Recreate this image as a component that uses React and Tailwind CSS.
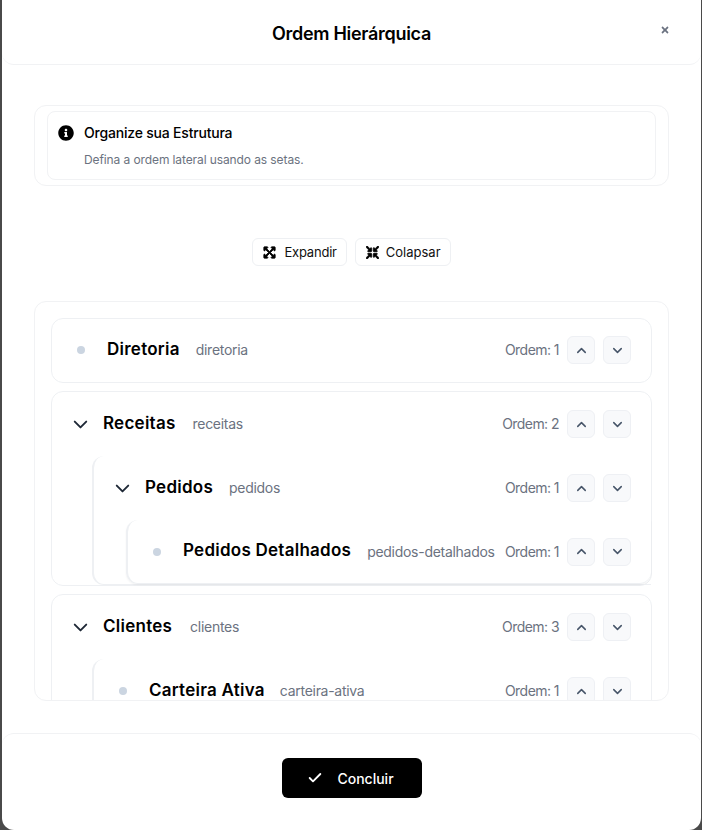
import React from "react";
import { ChevronDown, ChevronUp, Check } from "lucide-react";
import { FaInfoCircle, FaExpandArrowsAlt, FaCompressArrowsAlt, FaTimes } from "react-icons/fa";

function Order({ n }) {
  return (
    <div className="ml-auto flex items-center shrink-0">
      <span className="text-[14px] text-[#6b7280] mr-2 pb-px whitespace-nowrap tracking-[-0.55px]">Ordem: {n}</span>
      <button className="w-7 h-7 rounded-md border border-[#eef0f4] bg-[#f8f9fb] flex items-center justify-center text-[#475569] mr-2">
        <ChevronUp size={15} strokeWidth={2.4} />
      </button>
      <button className="w-7 h-7 rounded-md border border-[#eef0f4] bg-[#f8f9fb] flex items-center justify-center text-[#475569]">
        <ChevronDown size={15} strokeWidth={2.4} />
      </button>
    </div>
  );
}

function Row({ height, pad, marker, name, slug, n, nameClass }) {
  return (
    <div className={`flex items-center pr-5 ${height} ${pad}`}>
      {marker === "chevron" ? (
        <ChevronDown size={23} strokeWidth={2} className="text-[#1f2937] shrink-0" />
      ) : (
        <span className="w-2 h-2 rounded-full bg-[#cbd5e1] shrink-0" />
      )}
      <span className={`text-[17px] font-semibold text-black whitespace-nowrap tracking-[0.25px] pb-px ${nameClass}`}>{name}</span>
      <span className="text-[14px] text-[#6b7280] whitespace-nowrap ml-4 pb-px tracking-[-0.28px]">{slug}</span>
      <Order n={n} />
    </div>
  );
}

export default function App() {
  return (
    <div className="h-[830px] w-[702px] bg-[#4a4a4a] overflow-hidden font-['Inter',sans-serif]">
      <div className="ml-[2px] w-[699px] h-[830px] bg-white rounded-b-xl flex flex-col">
        <header className="h-[65px] shrink-0 relative flex items-center justify-center border-b border-[#f1f2f4] rounded-b-xl">
          <h1 className="text-[18px] font-semibold text-black tracking-[-0.3px] pt-[2px]">Ordem Hierárquica</h1>
          <FaTimes className="absolute right-[31px] top-[25px] text-[#6b7280]" size={10} />
        </header>

        <main className="flex-1 min-h-0 px-8 pt-10">
          <section className="rounded-xl border border-[#f1f2f4] px-3 py-[5px]">
            <div className="rounded-lg border border-[#f1f2f4] h-[69px] pl-[10px] pt-[10px]">
              <div className="flex items-center gap-[10px]">
                <FaInfoCircle size={16} className="text-black shrink-0" />
                <span className="text-[14px] font-medium text-black tracking-[-0.2px]">Organize sua Estrutura</span>
              </div>
              <p className="text-[12px] text-[#6b7280] ml-[26px] mt-2 tracking-[-0.1px]">Defina a ordem lateral usando as setas.</p>
            </div>
          </section>

          <div className="flex justify-center gap-2 mt-[52px]">
            <button className="h-7 pl-[10px] pr-[9px] pt-px rounded-md border border-[#eef0f3] flex items-center gap-2 text-[13px] text-[#111] tracking-[-0.2px]">
              <FaExpandArrowsAlt size={13} stroke="currentColor" strokeWidth={30} className="text-black" />Expandir
            </button>
            <button className="h-7 pl-[10px] pr-[9px] pt-px rounded-md border border-[#eef0f3] flex items-center gap-[7px] text-[13px] text-[#111]">
              <FaCompressArrowsAlt size={13} stroke="currentColor" strokeWidth={30} className="text-black" />Colapsar
            </button>
          </div>

          <section className="mt-[35px] h-[400px] rounded-xl border border-[#f1f2f4] p-4 pb-0 overflow-hidden flex flex-col gap-2">
            <div className="rounded-xl border border-[#eef0f3] shrink-0">
              <Row height="h-[63px] pb-px" pad="pl-[25px]" marker="dot" name="Diretoria" slug="diretoria" n={1} nameClass="ml-[22px]" />
            </div>

            <div className="rounded-xl border border-[#eef0f3] shrink-0">
              <Row height="h-16" pad="pl-[17px]" marker="chevron" name="Receitas" slug="receitas" n={2} nameClass="ml-[11px] mr-px" />
              <div className="ml-[40px] rounded-l-xl border-l-2 border-b border-[#eef0f3]">
                <Row height="h-16" pad="pl-[17px]" marker="chevron" name="Pedidos" slug="pedidos" n={1} nameClass="ml-[11px]" />
                <div className="ml-[32px] rounded-l-xl rounded-br-xl border-l-2 border-b border-[#eef0f3] shadow-[0_1px_2px_rgba(0,0,0,0.05)]">
                  <Row height="h-[63px]" pad="pl-[25px]" marker="dot" name="Pedidos Detalhados" slug="pedidos-detalhados" n={1} nameClass="ml-[22px]" />
                </div>
              </div>
            </div>

            <div className="rounded-xl border border-[#eef0f3] shrink-0">
              <Row height="h-16" pad="pl-[17px]" marker="chevron" name="Clientes" slug="clientes" n={3} nameClass="ml-[11px] mr-[2px]" />
              <div className="ml-[40px] rounded-l-xl border-l-2 border-[#eef0f3]">
                <Row height="h-16" pad="pl-[25px]" marker="dot" name="Carteira Ativa" slug="carteira-ativa" n={1} nameClass="ml-[22px] -mr-px" />
              </div>
            </div>
          </section>
        </main>

        <footer className="h-[97px] shrink-0 border-t border-[#f1f2f4] rounded-t-xl flex justify-center pt-6">
          <button className="w-[140px] h-10 pr-[2px] bg-black text-white rounded-md flex items-center justify-center gap-[14px] text-[14px] font-medium">
            <Check size={16} strokeWidth={2.75} />Concluir
          </button>
        </footer>
      </div>
    </div>
  );
}
